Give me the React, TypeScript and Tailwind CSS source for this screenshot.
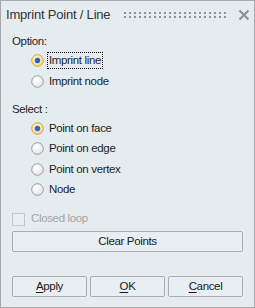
import React from "react";

function Radio({ checked }: { checked: boolean }) {
  return (
    <svg width="13" height="13" viewBox="0 0 13 13" className="shrink-0">
      <defs>
        <radialGradient id="rgU" cx="40%" cy="35%" r="70%">
          <stop offset="0%" stopColor="#ffffff" />
          <stop offset="100%" stopColor="#e3e3e3" />
        </radialGradient>
        <radialGradient id="rgC" cx="40%" cy="35%" r="70%">
          <stop offset="0%" stopColor="#fff6d8" />
          <stop offset="100%" stopColor="#f4d67a" />
        </radialGradient>
      </defs>
      {checked ? (
        <>
          <circle cx="6.5" cy="6.5" r="5.8" fill="url(#rgC)" stroke="#e0a526" strokeWidth="1" />
          <circle cx="6.5" cy="6.5" r="2.7" fill="#2b66c9" />
        </>
      ) : (
        <circle cx="6.5" cy="6.5" r="5.8" fill="url(#rgU)" stroke="#9c9c9c" strokeWidth="1" />
      )}
    </svg>
  );
}

function RadioRow({
  label,
  checked,
  focused,
  h,
}: {
  label: string;
  checked: boolean;
  focused?: boolean;
  h: string;
}) {
  return (
    <div className={`flex items-center pl-[19px] ${h}`}>
      <Radio checked={checked} />
      <span
        className={`ml-[3px] px-[1px] leading-[15px] ${
          focused ? "border border-dotted border-black" : "border border-transparent"
        }`}
      >
        {label}
      </span>
    </div>
  );
}

function Btn({ children }: { children: React.ReactNode }) {
  return (
    <div className="flex h-[21px] items-center justify-center rounded-[2px] border border-[#adadad] bg-[#e8eef1] text-[#1a1a1a]">
      {children}
    </div>
  );
}

export default function App() {
  return (
    <div
      className="flex h-[308px] w-[255px] flex-col border border-[#a7a9ab] bg-[#e5ecf0] text-[11.5px] tracking-[-0.35px] text-[#1e1e1e]"
      style={{ fontFamily: '"Liberation Sans", Arial, sans-serif' }}
    >
      {/* Title bar */}
      <div className="flex h-[28px] items-center pl-[5px] pr-[4px]">
        <span className="text-[13px] tracking-[-0.2px] text-[#333]">Imprint Point / Line</span>
        <svg width="104" height="8" className="ml-[14px] mt-[1px] shrink-0" viewBox="0 0 104 8">
          <defs>
            <pattern id="dots" x="0" y="0" width="5" height="4" patternUnits="userSpaceOnUse">
              <rect x="0" y="0" width="2" height="2" fill="#8e9194" />
            </pattern>
          </defs>
          <rect x="0" y="0" width="104" height="6" fill="url(#dots)" />
        </svg>
        <svg width="12" height="12" viewBox="0 0 12 12" className="ml-auto">
          <path d="M1.5 1.5 L10.5 10.5 M10.5 1.5 L1.5 10.5" stroke="#8c8f92" strokeWidth="2" />
        </svg>
      </div>

      <div className="flex flex-1 flex-col pl-[11px] pr-[11px]">
        <div className="mt-[5px] leading-[14px]">Option:</div>
        <div className="mt-[2px]">
          <RadioRow label="Imprint line" checked focused h="h-[21px]" />
          <RadioRow label="Imprint node" checked={false} h="h-[21px]" />
        </div>

        <div className="mt-[10px] leading-[14px]">Select :</div>
        <div className="mt-[2px]">
          <RadioRow label="Point on face" checked h="h-[20.5px]" />
          <RadioRow label="Point on edge" checked={false} h="h-[20.5px]" />
          <RadioRow label="Point on vertex" checked={false} h="h-[20.5px]" />
          <RadioRow label="Node" checked={false} h="h-[20.5px]" />
        </div>

        <div className="mt-[9px] flex h-[20px] items-center">
          <div className="h-[13px] w-[13px] border border-[#c3c6c9] bg-[#e9eef1]" />
          <span className="ml-[6px] text-[#a2a4a6]">Closed loop</span>
        </div>

        <div className="mt-[2px]">
          <Btn>Clear Points</Btn>
        </div>

        <div className="mt-auto mb-[10px] grid grid-cols-3 gap-[3px]">
          <Btn>
            <span>
              <span className="underline underline-offset-[2px]">A</span>pply
            </span>
          </Btn>
          <Btn>
            <span>
              <span className="underline underline-offset-[2px]">O</span>K
            </span>
          </Btn>
          <Btn>
            <span>
              <span className="underline underline-offset-[2px]">C</span>ancel
            </span>
          </Btn>
        </div>
      </div>
    </div>
  );
}
